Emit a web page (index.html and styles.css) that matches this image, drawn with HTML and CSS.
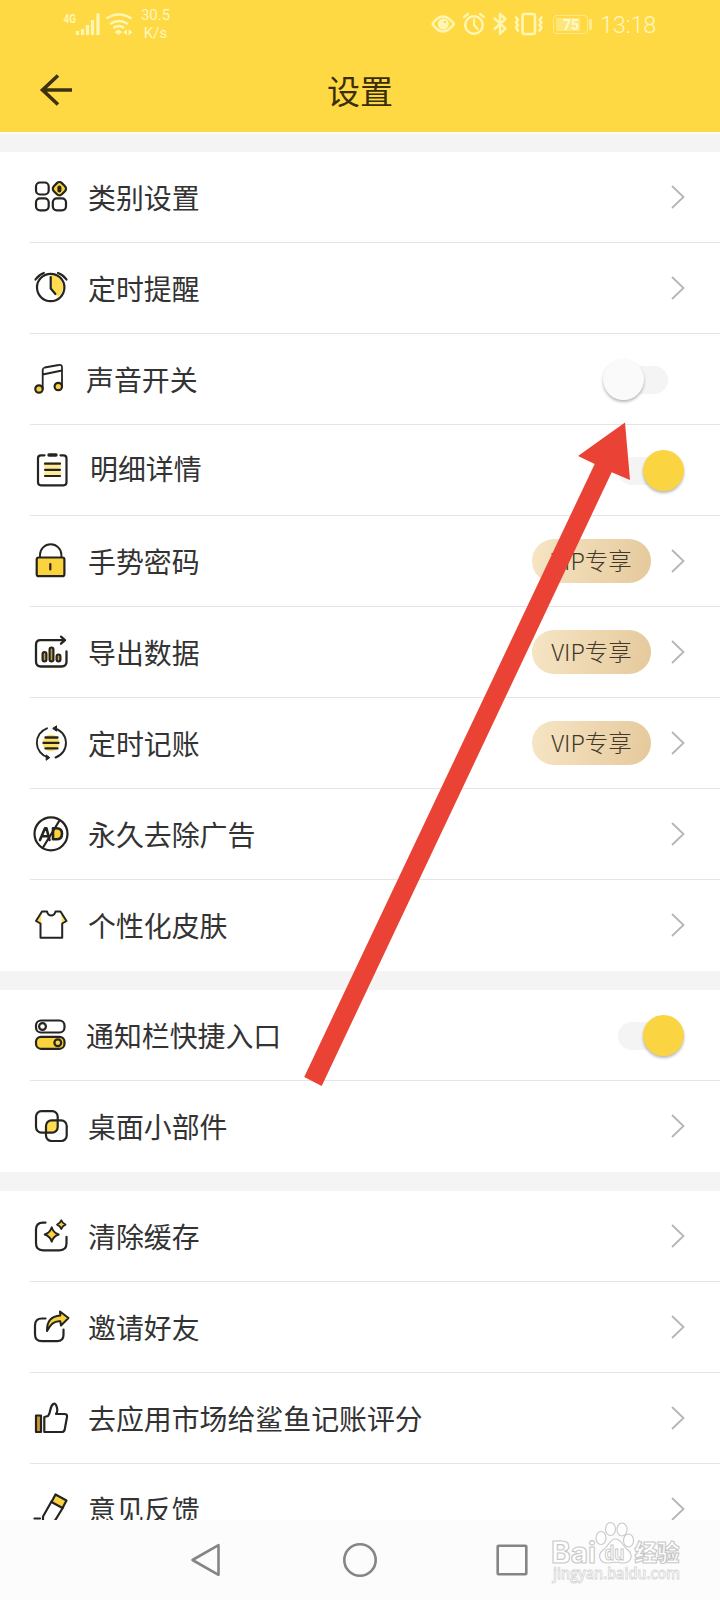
FILE: index.html
```html
<!DOCTYPE html>
<html lang="zh-CN">
<head>
<meta charset="utf-8">
<title>设置</title>
<link rel="stylesheet" href="styles.css">
</head>
<body>
<div class="app">
  <header class="header">
    <div class="status">
      <svg class="signal" width="76" height="28" viewBox="60 10 76 28">
        <text class="net" x="63.500" y="22.500" textLength="12.500" lengthAdjust="spacingAndGlyphs">4G</text>
        <path d="M77.500 31v4M82.500 29v6M87.500 25v10M92.500 20v15M98 13.500v21.500" stroke-width="3.200"/>
        <path d="M106.500 18.500q12.500-8 25 0M110 24q9-6 18 0M113.500 28q5.500-4 10.500 0" stroke-width="2.600"/>
        <path class="solid" d="M114.500 32l4-2.500 3.500 2.500-3.500 3zM123 32.300l4-3v6zM132.500 32.300l-4-3v6z"/>
      </svg>
      <div class="speed"><span>30.5</span><span>K/s</span></div>
      <svg class="sys" width="162" height="28" viewBox="430 10 162 28">
        <path d="M432.500 24q10-15 21.500 0q-11.500 15-21.500 0z" stroke-width="2.400"/>
        <circle class="solid" cx="443.300" cy="24" r="5.500"/>
        <circle class="dot" cx="445" cy="22" r="1.200"/>
        <circle cx="474" cy="25" r="8.800" stroke-width="2.400"/>
        <path d="M474 19.500V25l3.500 4M464 17l4-3M484 17l-4-3" stroke-width="2.200"/>
        <path d="M494.500 18.500l11 10-5.500 5.500V14l5.500 5-11 10" stroke-width="2.400"/>
        <rect x="522.500" y="14" width="12.500" height="20" rx="2" stroke-width="2.600"/>
        <path d="M516 17.500l2 2.500-2 2.500 2 2.500-2 2.500 2 3M541.500 17.500l-2 2.500 2 2.500-2 2.500 2 2.500-2 3" stroke-width="2.600"/>
        <g opacity=".8">
          <rect x="553.500" y="15.500" width="34" height="18" rx="3" stroke-width="1" opacity=".7"/>
          <rect class="fill" x="556" y="18" width="24" height="13" rx="1"/>
          <path d="M590.500 20v9" stroke-width="2.500"/>
        </g>
        <text class="level" x="563" y="30">75</text>
      </svg>
      <time class="clock">13:18</time>
    </div>
    <div class="titlebar">
      <svg class="back" width="34" height="34" viewBox="39 73 34 34"><path d="M58 75.500L42.500 90l15.500 14.500M42.500 90h29.500"/></svg>
      <h1 class="title">设置</h1>
    </div>
  </header>

  <main class="list">
    <section class="group">
      <div class="row">
        <svg class="icon" viewBox="0 0 48 48"><rect x="8" y="10.500" width="12.700" height="12" rx="4"/><rect x="8" y="26.300" width="12.700" height="12" rx="4"/><rect x="24.800" y="26.300" width="13.200" height="12" rx="4"/><rect class="y" x="25.700" y="11" width="11.400" height="11.400" rx="3.500" transform="rotate(45 31.400 16.700)"/><path d="M31.400 15.500v3" stroke-width="4"/></svg>
        <span class="label">类别设置</span><svg class="chev" viewBox="0 0 14 24"><path d="M1 1l11.500 11L1 23"/></svg>
      </div>
      <div class="row">
        <svg class="icon" viewBox="0 0 48 48"><path class="yo" d="M22.700 24V12a12 12 0 0 1 7 22z"/><circle cx="22.700" cy="24.500" r="13.700"/><path d="M22.700 14V25.500l4.700 5.500M7.500 16.500q3-4.500 8.300-6.500M30 10q5.500 2 8.500 6.500"/></svg>
        <span class="label">定时提醒</span><svg class="chev" viewBox="0 0 14 24"><path d="M1 1l11.500 11L1 23"/></svg>
      </div>
      <div class="row">
        <svg class="icon" viewBox="0 0 48 48"><circle class="y" cx="11" cy="35" r="3.700"/><circle class="y" cx="30.300" cy="32.500" r="3.700"/><path d="M14.700 34.500V16q0-2 2-2.500l14-2.500q3.300-.7 3.300 2.500v19M14.700 20.500L34 16.500" stroke-width="1.800"/></svg>
        <span class="label label--near">声音开关</span><span class="switch"><i class="knob"></i></span>
      </div>
      <div class="row">
        <svg class="icon" viewBox="0 0 48 48"><path class="yo" d="M16 17h17v5l-2 2 2 3v5H16v-4l2-3-2-3z" opacity=".6"/><path d="M16.500 10.300H13q-3 0-3 3v24q0 3 3 3h22.500q3 0 3-3v-24q0-3-3-3H32.500"/><path d="M21 10h7" stroke-width="3.400"/><path d="M17 18.700h15M17 24.800h15M17 31h15"/></svg>
        <span class="label label--far">明细详情</span><span class="switch switch--on"><i class="knob"></i></span>
      </div>
      <div class="row">
        <svg class="icon" viewBox="0 0 48 48"><path d="M12 21v-2a10.700 10.700 0 0 1 21.400 0v2" stroke-width="1.900"/><rect class="y" x="8.700" y="21.500" width="27.700" height="18.700" rx="2"/><path d="M22.300 28v5.500"/></svg>
        <span class="label">手势密码</span><span class="vip">VIP专享</span><svg class="chev" viewBox="0 0 14 24"><path d="M1 1l11.500 11L1 23"/></svg>
      </div>
      <div class="row">
        <svg class="icon" viewBox="0 0 48 48"><path d="M36 13.200H12.500q-4.500 0-4.500 4.500V34.500q0 5 5 5h20.500q5 0 5-5v-10M33 9.700l4 3.500-4 3.500" stroke-width="2.300"/><rect class="dark" x="14.600" y="25" width="3.800" height="9.500" rx="1.900"/><rect class="dark" x="21.600" y="20.500" width="3.800" height="14" rx="1.900"/><rect class="dark" x="28.600" y="27.500" width="3.800" height="7" rx="1.900"/></svg>
        <span class="label">导出数据</span><span class="vip">VIP专享</span><svg class="chev" viewBox="0 0 14 24"><path d="M1 1l11.500 11L1 23"/></svg>
      </div>
      <div class="row">
        <svg class="icon" viewBox="0 0 48 48"><circle class="yo" cx="23" cy="24.900" r="8.500" opacity=".85"/><path d="M19 10.300A15.200 15.200 0 0 0 20 39.300M27.500 39.500A15.200 15.200 0 0 0 26 10.200" stroke-width="1.900"/><path class="ink" d="M25 10.300l3.500-2.500v5zM21.500 39.400l-3.300-2.500v5z"/><path d="M17.500 19.500h12M15.500 24.900h15M17.500 30.400h12" stroke-width="2.300"/></svg>
        <span class="label">定时记账</span><span class="vip">VIP专享</span><svg class="chev" viewBox="0 0 14 24"><path d="M1 1l11.500 11L1 23"/></svg>
      </div>
      <div class="row">
        <svg class="icon" viewBox="0 0 48 48"><circle cx="23" cy="24.800" r="16.500"/><path class="y" d="M25 19.300h3.500q5.500 0 5.500 5.500t-5.500 5.500H25z" stroke-width="2.600"/><path d="M12 31l5-11.700h1.500L21.500 31M14 27.300h7" stroke-width="2.600"/><path d="M31.500 11.500L15 38.500"/></svg>
        <span class="label">永久去除广告</span><svg class="chev" viewBox="0 0 14 24"><path d="M1 1l11.500 11L1 23"/></svg>
      </div>
      <div class="row">
        <svg class="icon" viewBox="0 0 48 48"><path class="yo" d="M13.700 12l-6 9 5 2.500zM33 12l6 9-5 2.500z" opacity=".9"/><path d="M14 11.500h5q1 4 4.200 4t4.300-4h5l6 9.500-4.300 2.500V37.700H12.500V23.500L8 21z" stroke-width="2"/></svg>
        <span class="label">个性化皮肤</span><svg class="chev" viewBox="0 0 14 24"><path d="M1 1l11.500 11L1 23"/></svg>
      </div>
    </section>

    <section class="group">
      <div class="row">
        <svg class="icon" viewBox="0 0 48 48"><rect x="8" y="10.500" width="28.500" height="12" rx="5"/><rect class="y" x="8" y="26.800" width="28.500" height="12" rx="5"/><circle cx="14.500" cy="16.500" r="3.400"/><circle cx="29.800" cy="32.700" r="3.400"/></svg>
        <span class="label label--near">通知栏快捷入口</span><span class="switch switch--on"><i class="knob"></i></span>
      </div>
      <div class="row">
        <svg class="icon" viewBox="0 0 48 48"><rect class="yo" x="18" y="19.300" width="11.700" height="12" rx="3"/><rect x="8" y="10.100" width="21.700" height="21.500" rx="5.500"/><rect x="18" y="19.300" width="20.700" height="20.700" rx="5.500"/></svg>
        <span class="label">桌面小部件</span><svg class="chev" viewBox="0 0 14 24"><path d="M1 1l11.500 11L1 23"/></svg>
      </div>
    </section>

    <section class="group">
      <div class="row">
        <svg class="icon" viewBox="0 0 48 48"><path d="M17.500 11.600H15q-7 0-7 7V32.300q0 7 7 7h16.500q7 0 7-7v-6.500"/><path class="y" d="M23.700 16.300q1.500 5.500 7 7.200-5.500 1.700-7 7.200-1.500-5.500-7-7.200 5.500-1.700 7-7.200zM33.300 9.300q1 3 4.200 4.300-3.200 1.300-4.200 4.300-1-3-4.200-4.300 3.200-1.300 4.200-4.300z" stroke-width="1.900"/></svg>
        <span class="label">清除缓存</span><svg class="chev" viewBox="0 0 14 24"><path d="M1 1l11.500 11L1 23"/></svg>
      </div>
      <div class="row">
        <svg class="icon" viewBox="0 0 48 48"><path d="M17.500 16.500H14q-7 0-7 7v8.700q0 7 7 7h15q6.500 0 6.500-6.500V27.500"/><path class="y" d="M32 9.500l8.500 6.500-7.500 7.500-.7-4.200q-8-1-13.300 9.700Q18.500 14.500 32.300 13.500z" stroke-width="2"/></svg>
        <span class="label">邀请好友</span><svg class="chev" viewBox="0 0 14 24"><path d="M1 1l11.500 11L1 23"/></svg>
      </div>
      <div class="row">
        <svg class="icon" viewBox="0 0 48 48"><rect class="dark" x="8" y="22.500" width="5" height="16.500"/><path d="M16.300 39V24l3.700-1q1.500-1.500 2.300-6t3-6 3.500 3-.8 7h8.500q3 0 2.500 3l-2.300 12.500q-.5 2.500-3 2.500z"/></svg>
        <span class="label">去应用市场给鲨鱼记账评分</span><svg class="chev" viewBox="0 0 14 24"><path d="M1 1l11.500 11L1 23"/></svg>
      </div>
      <div class="row">
        <svg class="icon" viewBox="0 0 48 48"><path d="M23.500 17.500L15 32.500V42l12-5.500 8-13"/><path class="y" d="M27.500 10.500l11 6-4 7.500-11-6z"/><path d="M6.500 34.500H12"/></svg>
        <span class="label">意见反馈</span><svg class="chev" viewBox="0 0 14 24"><path d="M1 1l11.500 11L1 23"/></svg>
      </div>
    </section>
  </main>

  <nav class="nav">
    <svg viewBox="0 0 36 36"><path d="M2.500 18L28.500 3.200v29.600z"/></svg>
    <svg viewBox="0 0 36 36"><circle cx="18" cy="18" r="15.700"/></svg>
    <svg viewBox="0 0 36 36"><rect x="3.700" y="3.700" width="28.600" height="28.600" rx="1"/></svg>
  </nav>

  <svg class="pointer" width="330" height="670" viewBox="302 420 330 670"><path d="M625 422.500L630 480l-18.300-7.700L321.700 1086l-17.500-9L594.700 464 578 456z"/></svg>

  <svg class="mark" width="136" height="66" viewBox="550 1520 136 66">
    <text class="brand" x="551" y="1562.500" textLength="45" lengthAdjust="spacingAndGlyphs">Bai</text>
    <ellipse cx="601" cy="1538" rx="5" ry="6.500"/><ellipse cx="610.500" cy="1529" rx="5" ry="6.500"/><ellipse cx="622" cy="1529.500" rx="5" ry="6.500"/><ellipse cx="628.500" cy="1540.500" rx="5" ry="6.500"/>
    <path d="M615 1539q4.500 0 7.500 5 2.500 4 6 6.500 4 4 2 8.500-2.500 4.500-8 4-7-1.500-14 0-6.500.5-8.500-4.500-1.500-5 3-8.500 4-3 6-6.500 3-4.500 6-4.500z"/>
    <text class="du" x="604.500" y="1560" textLength="20" lengthAdjust="spacingAndGlyphs">du</text>
    <text class="cn" x="634.500" y="1560.500">经验</text>
    <text class="url" x="553" y="1579" textLength="127" lengthAdjust="spacingAndGlyphs">jingyan.baidu.com</text>
  </svg>
</div>
</body>
</html>
```
FILE: styles.css
```css
* { box-sizing: border-box; }
body {
  margin: 0;
  font-family: "Noto Sans CJK SC", "Noto Sans", sans-serif;
  color: #333;
  background: #fff;
}
svg { display: block; flex: none; overflow: visible; fill: none; }
.app {
  position: relative;
  display: flex;
  flex-direction: column;
  width: 720px;
  height: 1600px;
  overflow: hidden;
}

/* Header */
.header { flex: none; height: 132px; background: #ffd943; }
.status {
  display: flex;
  align-items: center;
  height: 48px;
  padding-left: 60px;
  color: #fff6c0;
  font-family: Roboto, sans-serif;
}
.status svg { stroke: #fff6b4; stroke-linecap: round; stroke-linejoin: round; }
.status text { stroke: none; fill: #fff6b4; font-weight: 700; }
.status .solid { fill: #fff6b4; stroke: none; }
.status .dot { fill: #ffd943; stroke: none; }
.status .fill { fill: #fff3b0; opacity: .65; stroke: none; }
.status .signal path { stroke-linecap: butt; }
.net { font-size: 12.5px; }
.status .level { font-size: 14px; fill: #fff9d0; }
.speed {
  display: flex;
  flex-direction: column;
  align-items: center;
  width: 40px;
  padding-right: 1px;
  font-size: 15px;
  line-height: 18px;
}
.sys { margin-left: 254px; }
.clock { margin-left: 8px; font-size: 23.5px; font-weight: 300; letter-spacing: -.2px; padding-top: 2px; }
.titlebar {
  display: grid;
  grid-template-columns: 72px 1fr 72px;
  align-items: center;
  height: 84px;
}
.back { margin-left: 39px; stroke: #3d3210; stroke-width: 3.6; }
.title {
  margin: 0;
  text-align: center;
  font-size: 33px;
  font-weight: 400;
  line-height: 48px;
  color: #3a2e0a;
}

/* Settings list */
.list {
  flex: 1;
  min-height: 0;
  overflow: hidden;
  display: flex;
  flex-direction: column;
  gap: 19px;
  padding-top: 18px;
  border-top: 2px solid #fffdf5;
  background: #f4f4f4;
}
.group { flex: none; background: #fff; }
.row {
  position: relative;
  display: flex;
  align-items: center;
  height: 91px;
  padding: 0 35px 0 28px;
}
.row:not(:last-child)::after {
  content: "";
  position: absolute;
  left: 30px;
  right: 0;
  bottom: 0;
  height: 1px;
  background: #e4e4e4;
}
.icon {
  width: 48px;
  height: 48px;
  margin-top: -3px;
  stroke: #262420;
  stroke-width: 2.2;
  stroke-linecap: round;
  stroke-linejoin: round;
}
.icon .y { fill: #fbd33d; }
.icon .yo { fill: #ffdc50; stroke: none; }
.icon .dark { fill: #c79d35; }
.icon .ink { fill: #262420; stroke-width: 1; }
.label {
  flex: 1;
  margin: -2px 0 0 12px;
  font-size: 27.9px;
  line-height: 40px;
}
.label--near { margin-left: 10px; }
.label--far { margin: -5px 0 0 14px; }
.chev { width: 14px; height: 24px; margin-top: -2px; stroke: #b5b5b5; stroke-width: 1.8; }
.vip {
  width: 119px;
  height: 44px;
  margin: -2px 20px 0 0;
  border-radius: 22px;
  background: linear-gradient(100deg, #f6e5c4, #e5c99c);
  color: #40382a;
  text-align: center;
  font-size: 23.5px;
  font-weight: 300;
  line-height: 42px;
}
.switch {
  display: flex;
  align-items: center;
  width: 50px;
  height: 28px;
  margin: 0 17px 0 0;
  border-radius: 14px;
  background: #f4f4f4;
}
.knob {
  flex: none;
  width: 41px;
  height: 41px;
  margin-left: -15px;
  border-radius: 50%;
  background: #fafafa;
  box-shadow: 0 2px 3px rgba(0, 0, 0, .28);
}
.switch--on .knob { margin-left: 25px; background: #fad541; }

/* System navigation */
.nav {
  flex: none;
  display: flex;
  align-items: center;
  justify-content: center;
  gap: 116px;
  height: 80px;
  background: #fcfcfc;
}
.nav svg { width: 36px; height: 36px; stroke: #858585; stroke-width: 2.6; stroke-linejoin: round; }

/* Overlays */
.pointer { position: absolute; left: 302px; top: 420px; fill: #ea4335; }
.mark { position: absolute; left: 550px; top: 1520px; stroke: #c9c9c9; stroke-width: 1.1; fill: #fff; }
.mark text { font-family: "Open Sans", sans-serif; font-weight: 700; }
.mark .brand { font-family: Inter, sans-serif; font-size: 29.5px; }
.mark .du { font-size: 19px; }
.mark .cn { font-family: "Noto Sans CJK SC", sans-serif; font-size: 22.5px; font-weight: 900; }
.mark .url { font-size: 15.5px; font-weight: 600; stroke: #d4d4d4; stroke-width: .8; }
```
